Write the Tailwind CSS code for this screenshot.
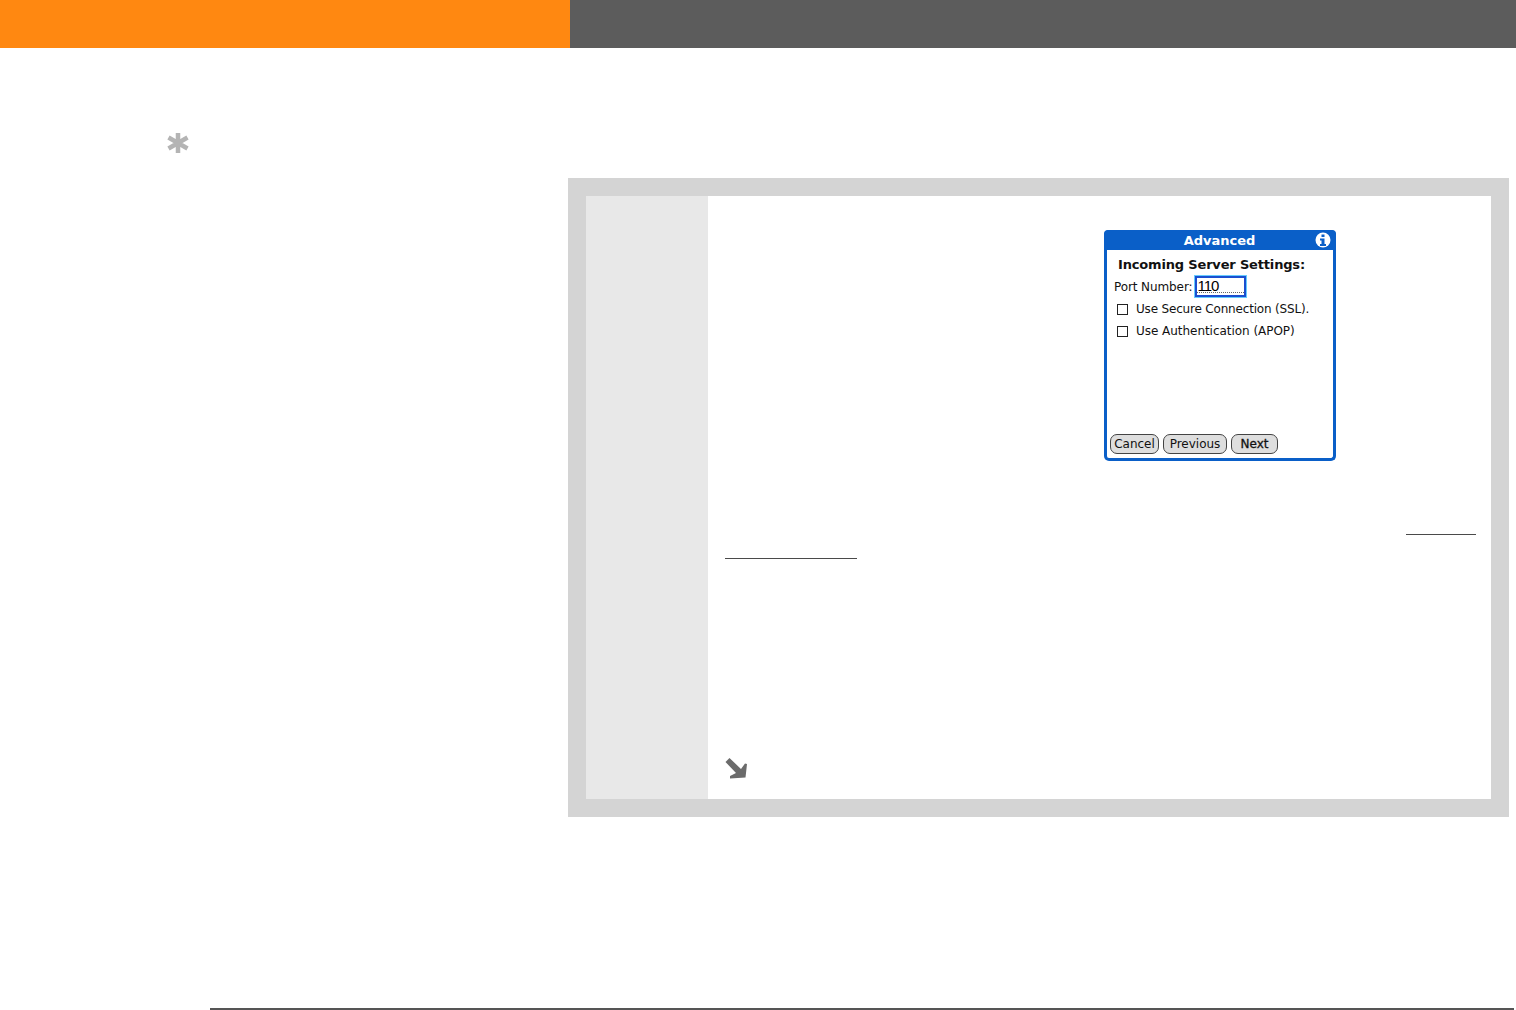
<!DOCTYPE html>
<html lang="en">
<head>
  <meta charset="UTF-8" />
  <title>Advanced</title>
  <script src="https://cdn.jsdelivr.net/npm/@tailwindcss/browser@4"></script>
</head>
<body class="h-[1010px] overflow-hidden bg-white flex flex-col font-['DejaVu_Sans',sans-serif]">

  <!-- top bar -->
  <div class="flex h-12 shrink-0">
    <div class="w-[570px] bg-[#ff8811]"></div>
    <div class="flex-1 bg-[#5c5c5c]"></div>
  </div>

  <div class="flex flex-1">
    <!-- left margin with tip marker -->
    <div class="w-[568px] shrink-0 pl-[167px] pt-[84px]">
      <svg width="22" height="22" viewBox="0 0 22 22" fill="none" stroke="#b4b4b4" stroke-width="4.5">
        <path d="M11 1v20M1.500 5.500l19 11M20.500 5.500l-19 11" />
      </svg>
    </div>

    <!-- step box -->
    <div class="mt-[130px] w-[941px] h-[639px] bg-[#d4d4d4] p-[18px]">
      <div class="flex h-full bg-white">
        <div class="w-[122px] shrink-0 bg-[#e8e8e8]"></div>
        <div class="flex-1 flex flex-col pl-[17px] pr-[15px] pt-[34px] pb-5">

          <!-- device screen -->
          <div class="ml-[379px] w-[232px] h-[231px] flex flex-col rounded-[5px] border-[3px] border-t-0 border-[#0a5fc8] bg-white text-[12px] leading-[16px] text-[#111]">
            <div class="-mx-[3px] h-5 shrink-0 flex items-center justify-center relative rounded-t-[4px] bg-[#0a5fc8] text-white text-[13px] font-bold pt-[2px] pr-px">
              Advanced
              <svg class="absolute right-[5px] top-[2px]" width="16" height="16" viewBox="0 0 16 16">
                <circle cx="8" cy="8" r="7.500" fill="#fff" />
                <rect x="6.500" y="2.500" width="3" height="2.500" fill="#0a5fc8" />
                <path d="M5 6.500h4.500v5.500H11v2H5v-2h1.500V8.500H5z" fill="#0a5fc8" />
              </svg>
            </div>
            <div class="pl-[11px] pt-[7px] text-[13px] font-bold tracking-[-0.17px]">Incoming Server Settings:</div>
            <div class="flex items-center pl-[7px] mt-[2px] h-[22px]">
              <span class="pt-px tracking-[-0.1px]">Port Number:</span>
              <div class="ml-[3px] w-[51px] h-[21px] border-2 border-[#1a4fd0] bg-white shadow-[0_0_0_1px_#66ccff]">
                <span class="block w-[47px] h-[15px] border-b border-dotted border-[#666] font-['Liberation_Sans',sans-serif] text-[15px] leading-[16px] tracking-[-1px] text-black">110</span>
              </div>
            </div>
            <div class="flex items-center pl-[10px] mt-[1px] h-[22px]">
              <span class="size-[11px] border-[1.5px] border-[#222]"></span>
              <span class="ml-2 tracking-[-0.18px]">Use Secure Connection (SSL).</span>
            </div>
            <div class="flex items-center pl-[10px] h-[22px]">
              <span class="size-[11px] border-[1.5px] border-[#222]"></span>
              <span class="ml-2 tracking-[-0.04px]">Use Authentication (APOP)</span>
            </div>
            <div class="mt-auto mb-[4px] ml-[3px] flex gap-1">
              <div class="w-[49px] h-5 flex items-center justify-center rounded-[7px] border border-[#444] bg-[#dedede]">Cancel</div>
              <div class="w-[64px] h-5 flex items-center justify-center rounded-[7px] border border-[#444] bg-[#dedede]">Previous</div>
              <div class="w-[47px] h-5 flex items-center justify-center rounded-[7px] border border-[#444] bg-[#dedede] [-webkit-text-stroke:0.3px_#111]">Next</div>
            </div>
          </div>

          <!-- link rules -->
          <div class="mt-[73px] ml-[681px] w-[70px] h-px bg-[#4a4a4a]"></div>
          <div class="mt-[23px] w-[132px] h-px bg-[#4a4a4a]"></div>

          <!-- continue arrow -->
          <svg class="mt-auto block" width="22" height="21" viewBox="0 0 22 21" fill="#6b6b6b">
            <path d="M0.500 4L4.500 0L16 11L20 5.500L22 6L20.500 19.500L5 20.500L5 18L11 15Z" />
          </svg>
        </div>
      </div>
    </div>
  </div>

  <!-- footer rule -->
  <div class="ml-[210px] mr-[2px] h-[2px] shrink-0 bg-[#555]"></div>
</body>
</html>
